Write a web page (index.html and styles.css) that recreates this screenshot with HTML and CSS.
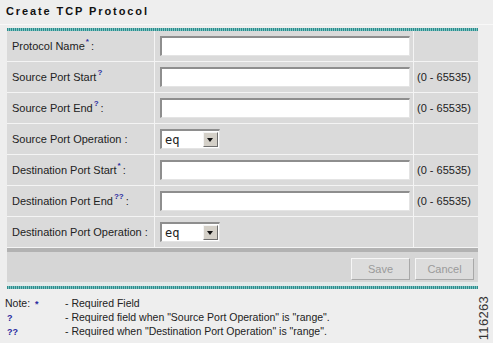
FILE: index.html
```html
<!DOCTYPE html>
<html lang="en">
<head>
    <meta charset="UTF-8">
    <title>Create TCP Protocol</title>
    <link rel="stylesheet" href="styles.css">
</head>
<body>

    <!-- Page Title -->
    <h1 class="title">Create TCP Protocol</h1>

    <!-- Form Panel -->
    <div class="panel">
        <table class="form">
            <tr>
                <td class="form__label">Protocol Name<sup class="mark">*</sup>:</td>
                <td class="form__field"><input type="text" class="text-box"></td>
                <td class="form__range"></td>
            </tr>
            <tr>
                <td class="form__label">Source Port Start<sup class="mark">?</sup></td>
                <td class="form__field"><input type="text" class="text-box"></td>
                <td class="form__range">(0 - 65535)</td>
            </tr>
            <tr>
                <td class="form__label">Source Port End<sup class="mark">?</sup>:</td>
                <td class="form__field"><input type="text" class="text-box"></td>
                <td class="form__range">(0 - 65535)</td>
            </tr>
            <tr>
                <td class="form__label">Source Port Operation :</td>
                <td class="form__field">
                    <div class="select"><span class="select__value">eq</span><span class="select__btn"></span></div>
                </td>
                <td class="form__range"></td>
            </tr>
            <tr>
                <td class="form__label">Destination Port Start<sup class="mark">*</sup>:</td>
                <td class="form__field"><input type="text" class="text-box"></td>
                <td class="form__range">(0 - 65535)</td>
            </tr>
            <tr>
                <td class="form__label">Destination Port End<sup class="mark">??</sup>:</td>
                <td class="form__field"><input type="text" class="text-box"></td>
                <td class="form__range">(0 - 65535)</td>
            </tr>
            <tr>
                <td class="form__label">Destination Port Operation :</td>
                <td class="form__field">
                    <div class="select"><span class="select__value">eq</span><span class="select__btn"></span></div>
                </td>
                <td class="form__range"></td>
            </tr>
        </table>

        <div class="actions">
            <button class="btn" disabled>Save</button>
            <button class="btn" disabled>Cancel</button>
        </div>
    </div>

    <!-- Notes -->
    <div class="notes">
        <div class="notes__key">Note: <span class="mark">*</span></div>
        <div>- Required Field</div>
        <div class="notes__key"><span class="mark">?</span></div>
        <div>- Required field when "Source Port Operation" is "range".</div>
        <div class="notes__key"><span class="mark">??</span></div>
        <div>- Required when "Destination Port Operation" is "range".</div>
    </div>

    <div class="fig-id">116263</div>

</body>
</html>
```

FILE: styles.css
```css
body {
    margin: 0;
    padding: 0;
    width: 493px;
    height: 343px;
    position: relative;
    background-color: #eeeeee;
    color: #222;
    font-family: "Liberation Sans", Arial, sans-serif;
    font-size: 11px;
    overflow: hidden;
}

/* Title */
.title {
    margin: 0;
    height: 25px;
    padding: 5px 0 0 6px;
    box-sizing: border-box;
    font-size: 11px;
    font-weight: 700;
    letter-spacing: 1.9px;
    color: #111;
    border-bottom: 1px solid #f8f8f8;
}

/* Panel with the dotted teal edges */
.panel {
    margin: 3px 0 0 7px;
    width: 471px;
    padding: 3px 0;
    background:
        repeating-linear-gradient(90deg, #2e8b8b 0 1px, #7cc4c4 1px 2px) top / 100% 3px no-repeat,
        repeating-linear-gradient(90deg, #2e8b8b 0 1px, #7cc4c4 1px 2px) bottom / 100% 3px no-repeat;
}

.form {
    width: 100%;
    border-collapse: collapse;
    background-color: #dadada;
}

.form td {
    height: 30px;
    padding: 0;
    border-bottom: 1px solid #f4f4f4;
    vertical-align: middle;
}

.form__label {
    width: 142px;
    padding-left: 5px !important;
    border-right: 1px solid #f4f4f4;
    white-space: nowrap;
}

.form__field {
    width: 253px;
    padding-left: 5px !important;
    border-right: 1px solid #f4f4f4;
}

.form__range {
    padding-left: 3px !important;
    white-space: nowrap;
}

.mark {
    color: #2a2aa0;
    font-size: 8px;
    font-weight: 700;
    vertical-align: 6px;
    line-height: 0;
    margin: 0 2px 0 1px;
}

.text-box {
    display: block;
    width: 250px;
    height: 20px;
    margin: 0;
    padding: 0;
    box-sizing: border-box;
    border-style: solid;
    border-width: 2px 1px 1px 2px;
    border-color: #8e8e8e #e4e4e4 #e4e4e4 #8e8e8e;
    background: #ffffff;
}

.select {
    display: flex;
    align-items: center;
    width: 60px;
    height: 20px;
    box-sizing: border-box;
    border-style: solid;
    border-width: 2px 1px 1px 2px;
    border-color: #8e8e8e #e4e4e4 #e4e4e4 #8e8e8e;
    background: #ffffff;
}

.select__value {
    flex: 1;
    padding-left: 3px;
    font-family: "DejaVu Sans Mono", monospace;
    font-size: 12px;
}

.select__btn {
    position: relative;
    width: 15px;
    height: 15px;
    margin-right: 1px;
    box-sizing: border-box;
    background: #d4d0c8;
    border-style: solid;
    border-width: 1px;
    border-color: #f4f4f4 #6e6e6e #6e6e6e #f4f4f4;
}

.select__btn::after {
    content: "";
    position: absolute;
    left: 3px;
    top: 5px;
    border-left: 3.5px solid transparent;
    border-right: 3.5px solid transparent;
    border-top: 4px solid #111;
}

/* Button bar */
.actions {
    display: flex;
    justify-content: flex-end;
    align-items: center;
    gap: 5px;
    height: 30px;
    padding-right: 4px;
    border-top: 4px solid #b2b2b2;
    border-bottom: 4px solid #e4eaea;
    background-color: #d6d6d6;
}

.btn {
    width: 59px;
    height: 22px;
    margin-top: 3px;
    padding: 0;
    font-family: "Liberation Sans", Arial, sans-serif;
    font-size: 11px;
    color: #9a9a9a;
    background: #dcdcdc;
    border: 1px solid;
    border-color: #f6f6f6 #a8a8a8 #a8a8a8 #f6f6f6;
}

/* Notes */
.notes {
    display: grid;
    grid-template-columns: 60px 1fr;
    margin: 7px 0 0 5px;
    font-size: 10.5px;
    line-height: 14px;
    color: #222;
}

.notes__key .mark {
    vertical-align: 0;
    font-size: 9px;
    margin-left: 2px;
}

.fig-id {
    position: absolute;
    right: 2px;
    bottom: 3px;
    writing-mode: vertical-rl;
    transform: rotate(180deg);
    font-size: 13px;
    letter-spacing: 0.3px;
    color: #333;
}
```
